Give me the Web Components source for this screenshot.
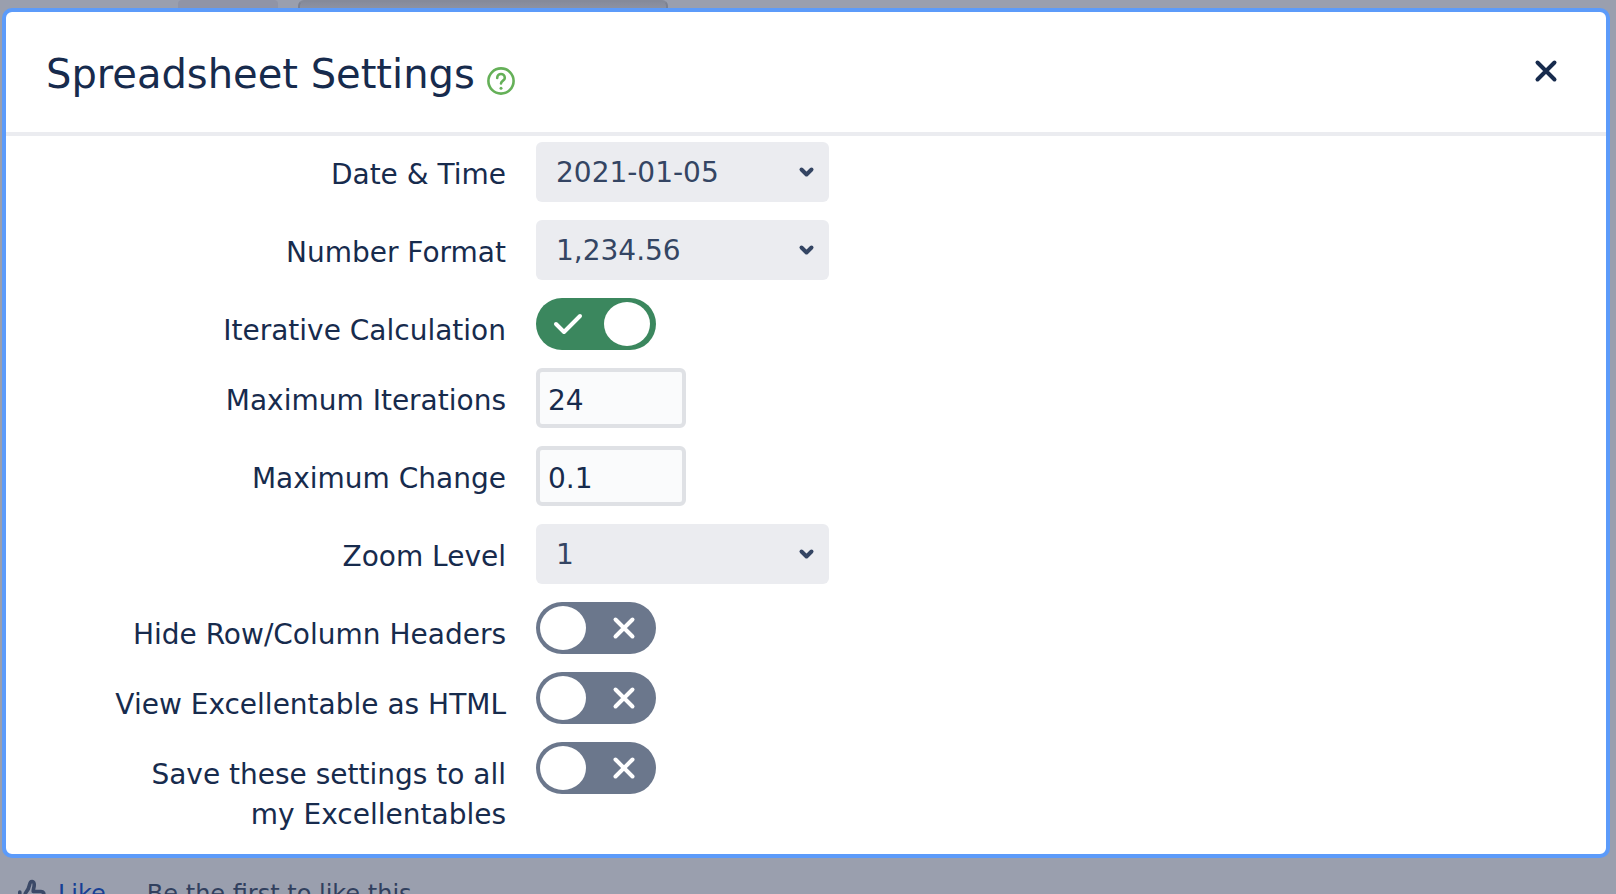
<!DOCTYPE html>
<html lang="en">
<head>
<meta charset="utf-8">
<title>Spreadsheet Settings</title>
<style>
  html, body { height: 100%; }
  body {
    margin: 0;
    overflow: hidden;
    background: #9a9fae;
    color: #172b4d;
    font-family: Verdana, "DejaVu Sans", sans-serif;
    font-size: 28px;
    line-height: 40px;
  }
</style>
</head>
<body>
<settings-page></settings-page>

<script>
const define = (name, html, setup) => {
  const template = document.createElement('template');
  template.innerHTML = html;
  customElements.define(name, class extends HTMLElement {
    constructor() {
      super();
      this.attachShadow({ mode: 'open' }).append(template.content.cloneNode(true));
    }
    connectedCallback() {
      if (setup) setup(this, this.shadowRoot);
    }
  });
};

/* Sliver of the page toolbar above the dialog */
define('page-toolbar', `
  <style>
    :host { display: flex; gap: 20px; height: 8px; padding-left: 178px; overflow: hidden; }
    .tab { width: 100px; height: 40px; background: #9094a6; border-radius: 4px; }
    .field { box-sizing: border-box; width: 370px; height: 40px; border: 2px solid #7c8190;
      border-top-color: #858a99; border-radius: 6px; background: linear-gradient(#868b9b, #8f94a3 8px); }
  </style>
  <div class="tab"></div><div class="field"></div>`);

/* Like bar below the dialog */
define('like-bar', `
  <style>
    :host { display: flex; align-items: center; padding: 16px 16px 0; color: #31405e; font-size: 24px; }
    svg { width: 32px; height: 32px; margin-right: 10px; }
    a { color: #173f95; text-decoration: none; margin-right: 41px; }
  </style>
  <svg viewBox="0 0 32 32" fill="none" stroke="#3b4967" stroke-width="3.600" stroke-linecap="round" stroke-linejoin="round" aria-hidden="true">
    <path d="M3.800 14v12M9 26V17c0-3 3-3 4.500-10C14.200 2 18.500 2.500 18.200 7c0 2.500-1 4-1 6.500H25c2.500 0 3.200 2 2.700 4L25 25c-.5 2-1.500 3-3 3H12c-2 0-3-1-3-2z"/>
  </svg>
  <a href="#like">Like</a><span>Be the first to like this.</span>`);

/* Dialog frame with a title bar and a body slot */
define('settings-dialog', `
  <style>
    :host { display: block; box-sizing: border-box; margin: 0 6px 0 2px; background: #fff; border: 4px solid #5c9bfa; border-radius: 10px; }
    header { display: flex; align-items: center; height: 120px; padding: 0 40px; border-bottom: 4px solid #ebecf0; }
    h1 { margin: 0; padding-top: 4px; font-size: 40px; line-height: 48px; font-weight: 400; }
    a { display: flex; margin: 18px auto 0 12px; }
    button { display: flex; padding: 8px 8px 10px; border: 0; background: none; }
  </style>
  <header>
    <h1><slot name="title"></slot></h1>
    <a href="#help" aria-label="Help">
      <svg width="28" height="28" viewBox="0 0 28 28" fill="none" stroke="#65b058" stroke-width="2.600" stroke-linecap="round">
        <circle cx="14" cy="14" r="12.600"/>
        <path d="M10.200 11c0-5.300 7.600-5.300 7.600 0 0 2.700-3.800 2.500-3.800 5.500"/>
        <path stroke-width="3" d="M14 21.200v.1"/>
      </svg>
    </a>
    <button type="button" aria-label="Close">
      <svg width="24" height="24" viewBox="0 0 24 24" stroke="#172b4d" stroke-width="4" stroke-linecap="round"><path d="M3.500 3.500l17 17M20.500 3.500l-17 17"/></svg>
    </button>
  </header>
  <slot></slot>`);

/* One labelled row: the control type comes from the "kind" attribute */
define('setting-row', `
  <style>
    :host { display: grid; grid-template-columns: 400px 1fr; column-gap: 30px; align-items: start; }
    label { padding-top: 13px; text-align: right; }
    .select, .switch { position: relative; justify-self: start; }
    select, .text { box-sizing: border-box; height: 60px; margin: 0; border-radius: 6px; font: inherit; }
    select { display: block; appearance: none; width: 293px; padding: 2px 40px 0 20px; border: 0; background: #ebecf0; color: #344563; }
    .select svg { position: absolute; right: 14px; top: 22px; pointer-events: none; }
    .text { width: 150px; padding: 4px 8px 0; border: 4px solid #dfe1e5; background: #fafbfc; color: #172b4d; }
    .switch input { display: block; appearance: none; width: 120px; height: 52px; margin: 0; border-radius: 26px; background: #6b778c; }
    .switch input:checked { background: #3b875e; }
    .switch svg { position: absolute; inset: 0; pointer-events: none; }
    .on, input:checked + svg .off { display: none; }
    input:checked + svg .on { display: inline; }
  </style>`, (host, root) => {
  const label = document.createElement('label');
  label.htmlFor = 'control';
  label.textContent = host.getAttribute('label');
  const value = host.getAttribute('value') || '';
  const markup = {
    select: `<div class="select"><select id="control"><option>${value}</option></select>
      <svg width="18" height="16" viewBox="0 0 18 16" fill="none" stroke="#344563" stroke-width="4" stroke-linecap="round" stroke-linejoin="round"><path d="M4.500 5.500l5 5 5-5"/></svg></div>`,
    text: `<input class="text" id="control" type="text" value="${value}">`,
    switch: `<div class="switch"><input id="control" type="checkbox" role="switch"${value === 'on' ? ' checked' : ''}>
      <svg width="120" height="52" viewBox="0 0 120 52" fill="none" stroke="#fff" stroke-width="4" stroke-linecap="round" stroke-linejoin="round">
        <g class="on"><path d="M20 26l8 8L44 18"/><ellipse cx="91" cy="26" rx="23" ry="22" fill="#fff" stroke="none"/></g>
        <g class="off"><path d="M79.500 17.500l17 17M96.500 17.500l-17 17"/><ellipse cx="27" cy="26" rx="23" ry="22" fill="#fff" stroke="none"/></g>
      </svg></div>`
  }[host.getAttribute('kind')];
  root.append(label);
  label.insertAdjacentHTML('afterend', markup);
});

define('settings-form', `
  <style>
    form { display: grid; grid-auto-rows: auto; row-gap: 18px; padding: 6px 40px 19px 100px; }
    setting-row[kind="switch"]:not(:last-child) { height: 52px; }
  </style>
  <form>
    <setting-row kind="select" label="Date &amp; Time" value="2021-01-05"></setting-row>
    <setting-row kind="select" label="Number Format" value="1,234.56"></setting-row>
    <setting-row kind="switch" label="Iterative Calculation" value="on"></setting-row>
    <setting-row kind="text" label="Maximum Iterations" value="24"></setting-row>
    <setting-row kind="text" label="Maximum Change" value="0.1"></setting-row>
    <setting-row kind="select" label="Zoom Level" value="1"></setting-row>
    <setting-row kind="switch" label="Hide Row/Column Headers"></setting-row>
    <setting-row kind="switch" label="View Excellentable as HTML"></setting-row>
    <setting-row kind="switch" label="Save these settings to all my Excellentables"></setting-row>
  </form>`);

define('settings-page', `
  <style>:host { display: block; }</style>
  <page-toolbar></page-toolbar>
  <settings-dialog role="dialog">
    <span slot="title">Spreadsheet Settings</span>
    <settings-form></settings-form>
  </settings-dialog>
  <like-bar></like-bar>`);
</script>
</body>
</html>
